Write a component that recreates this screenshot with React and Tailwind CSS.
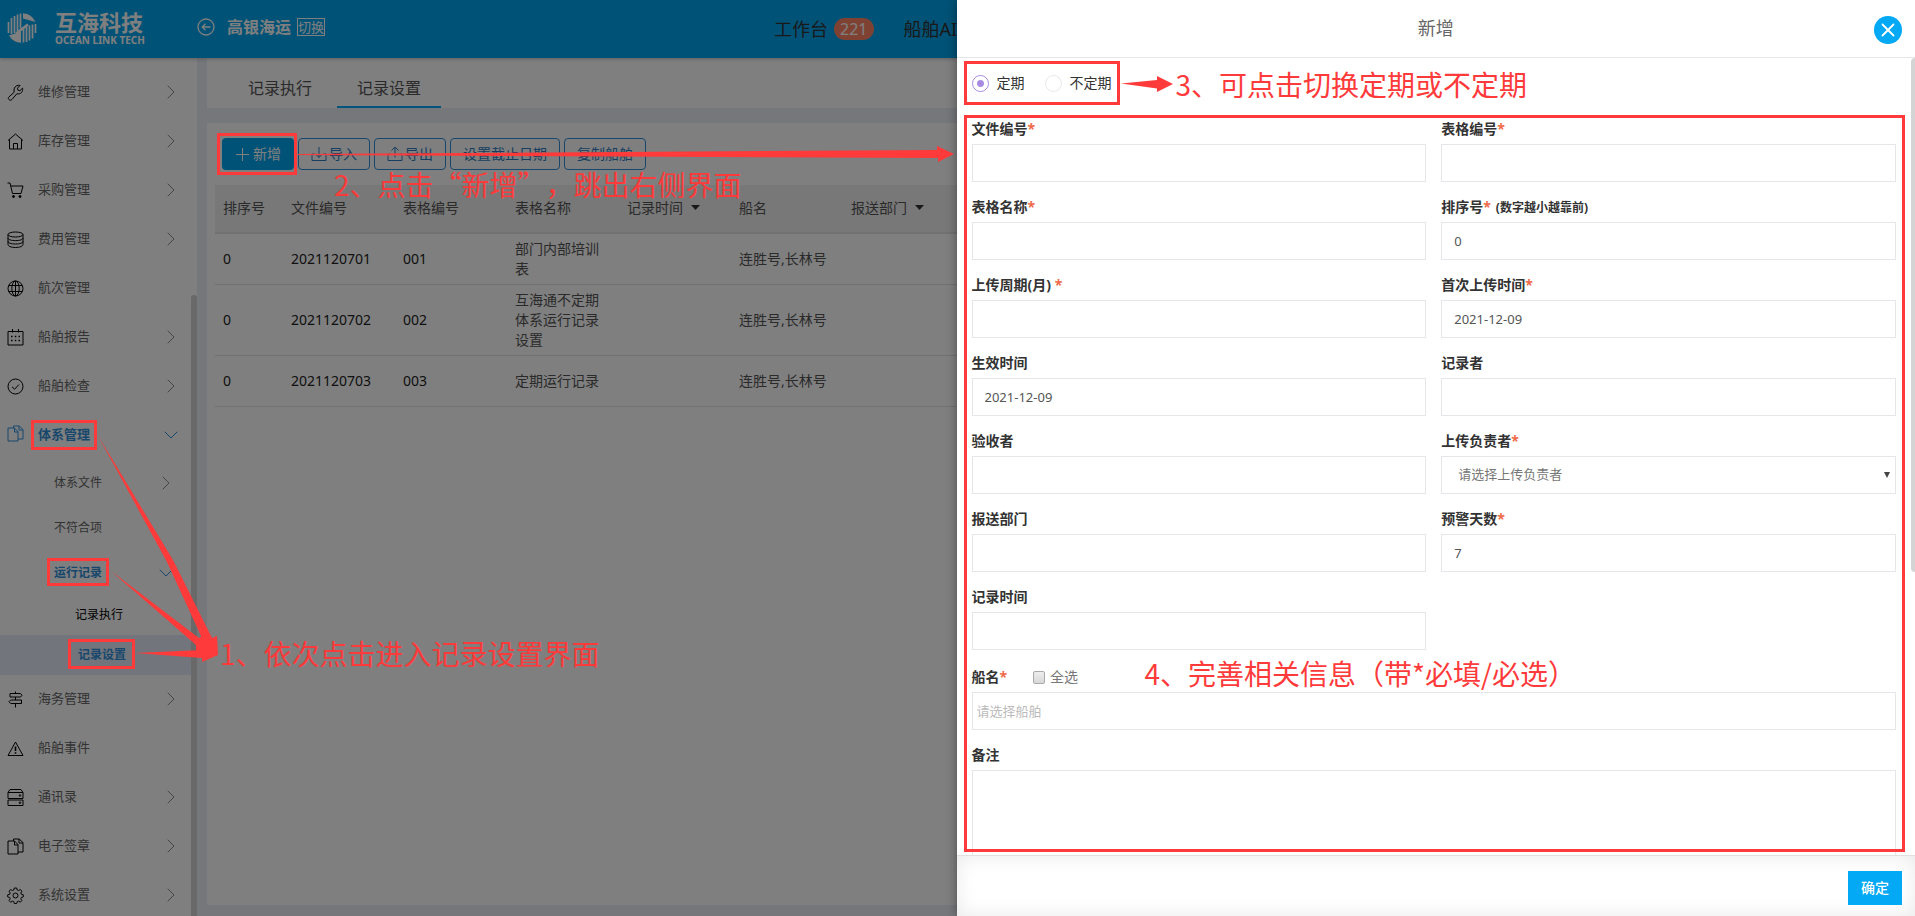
import { useState } from 'react';
import { ChevronDown, ChevronRight, X } from 'lucide-react';

const ICONS = {
  wrench: <path d="M2 15.6c-1-1-.9-1.900 0-2.700l5.200-4.700c-.7-3 .3-5.500 2.600-6.500 1.200-.5 2.200-.5 3.200-.2l-2.500 2.700.4 2 2 .5 2.700-2.600c.5 3.400-1.500 6.400-5.800 5.700L5 15.400c-.9 1-2 1.100-3 .2Z" />,
  home: <path d="M1 7.500 8.500 1 16 7.500M2.500 6.500v9.500h12V6.500M6.500 16v-5.500h4V16" />,
  cart: (
    <>
      <path d="M.5 1H3l2.500 10.500H14L16 4H4" />
      <circle cx="6.500" cy="14.500" r="1" fill="currentColor" />
      <circle cx="13" cy="14.500" r="1" fill="currentColor" />
    </>
  ),
  coins: (
    <>
      <ellipse cx="8.500" cy="3.500" rx="7.500" ry="2.500" />
      <path d="M1 3.500v10c0 1.600 3 3 7.500 3s7.500-1.400 7.500-3v-10M1 7c0 1.600 3 2.600 7.500 2.600S16 8.600 16 7M1 10.300c0 1.600 3 2.700 7.500 2.700s7.500-1.100 7.500-2.700" />
    </>
  ),
  globe: (
    <>
      <circle cx="8.500" cy="8.500" r="7.500" />
      <ellipse cx="8.500" cy="8.500" rx="3.700" ry="7.500" />
      <path d="M8.500 1v15M1.700 5.500h13.600M1.700 11.500h13.600" />
    </>
  ),
  calendar: (
    <>
      <path d="M1 2.500h15v13.500H1ZM5.500 0v3.500M11.500 0v3.500" />
      <path d="M4 7.500h1.500M7.800 7.500h1.500M11.500 7.500H13M4 11.500h1.500M7.800 11.500h1.500M11.500 11.500H13" strokeWidth="1.600" />
    </>
  ),
  check: (
    <>
      <circle cx="8.500" cy="8.500" r="7.500" />
      <path d="m5 8.800 2.600 2.400L12 6.500" />
    </>
  ),
  docs: <path d="M1 3h6.500L11 6.500V16H1ZM7.500 3v4H11M6.500 3V1h5.700L16 4.500V14h-5M12 1v4h4" />,
  sign: <path d="M8.500.5v2M3 2.500h10.500L15 4.300 13.500 6H3ZM8.500 6v3M14.500 9H3.700L2 10.700l1.700 1.800h10.800ZM8.500 12.500v4" />,
  warn: (
    <>
      <path d="M8.500 2 16 15.500H1Z" />
      <path d="M8.500 6.500v4.500M8.500 12.300v1.400" strokeWidth="1.600" />
    </>
  ),
  server: (
    <>
      <path d="M1 3.500 3 .5h11l2 3v6H1ZM1 3.500h15M1 11h15v5.500H1Z" />
      <circle cx="13" cy="6.500" r=".8" />
      <circle cx="13" cy="13.700" r=".8" />
    </>
  ),
  gear: (
    <>
      <circle cx="8.500" cy="8.500" r="2.500" />
      <path d="m7.300 1h2.400l.5 2 1.300.6 1.900-1.100 1.500 1.700-1.100 1.800.5 1.200 2 .6v2.100l-2 .6-.5 1.300 1.100 1.800-1.600 1.600-1.800-1.100-1.300.5-.5 2H7.300l-.5-2-1.300-.5-1.800 1.100-1.600-1.600 1.100-1.800-.5-1.300-2-.6V7.800l2-.6.5-1.200-1.100-1.800 1.500-1.700 1.900 1.100 1.300-.6Z" />
    </>
  ),
};

function NavIcon({ name }) {
  return (
    <span className="shrink-0 pb-[3px]">
      <svg viewBox="0 0 17 17" className="h-[17px] w-[17px]" fill="none" stroke="currentColor" strokeWidth="1">
        {ICONS[name]}
      </svg>
    </span>
  );
}

const NAV_TOP = [
  { icon: 'wrench', label: '维修管理', more: true },
  { icon: 'home', label: '库存管理', more: true },
  { icon: 'cart', label: '采购管理', more: true },
  { icon: 'coins', label: '费用管理', more: true },
  { icon: 'globe', label: '航次管理' },
  { icon: 'calendar', label: '船舶报告', more: true },
  { icon: 'check', label: '船舶检查', more: true },
];

const NAV_BOTTOM = [
  { icon: 'sign', label: '海务管理', more: true },
  { icon: 'warn', label: '船舶事件' },
  { icon: 'server', label: '通讯录', more: true },
  { icon: 'docs', label: '电子签章', more: true },
  { icon: 'gear', label: '系统设置', more: true },
];

function NavItem({ icon, label, more }) {
  return (
    <a href="#" className="flex h-[49px] items-center pr-2 pb-px pl-[7px] text-[13px] text-[#666]">
      <span className="text-black"><NavIcon name={icon} /></span>
      <span className="ml-[14px]">{label}</span>
      {more && <ChevronRight size={24} strokeWidth={1} className="ml-auto text-[#8c8c8c]" />}
    </a>
  );
}

function Sidebar() {
  return (
    <aside className="relative w-[197px] shrink-0 overflow-hidden bg-white">
      <nav className="pt-[10px] pr-[6px]">
        {NAV_TOP.map((item) => <NavItem key={item.label} {...item} />)}
        <a href="#" className="flex h-[49px] items-center pr-2 pb-px pl-[7px] text-[13px] font-bold text-[#2f8fd8]">
          <NavIcon name="docs" />
          <span className="ml-[14px]">体系管理</span>
          <ChevronDown size={24} strokeWidth={1} className="ml-auto" />
        </a>
        <a href="#" className="flex h-[45px] items-center pr-[13px] pl-[54px] text-xs text-[#666]">
          体系文件
          <ChevronRight size={24} strokeWidth={1} className="ml-auto text-[#8c8c8c]" />
        </a>
        <a href="#" className="flex h-[45px] items-center pl-[54px] text-xs text-[#666]">不符合项</a>
        <a href="#" className="flex h-[45px] items-center pr-[13px] pl-[54px] text-xs font-bold text-[#2f8fd8]">
          运行记录
          <ChevronDown size={24} strokeWidth={1} className="ml-auto" />
        </a>
        <a href="#" className="flex h-10 items-center pl-[75px] text-xs text-black">记录执行</a>
        <a href="#" className="flex h-10 items-center bg-[#e6ebf8] pl-[78px] text-xs font-bold text-[#2f8fd8]">记录设置</a>
        {NAV_BOTTOM.map((item) => <NavItem key={item.label} {...item} />)}
      </nav>
      <div className="absolute top-[237px] right-0 bottom-0 w-[6px] rounded-t bg-[#d2d2d2]" />
    </aside>
  );
}

function Logo() {
  return (
    <svg viewBox="0 0 30 30" className="h-[30px] w-[30px]" fill="none" stroke="white">
      <path d="M16 .2A15 15 0 0 1 28.500 9L16 5.500ZM14 29.800A15 15 0 0 1 2 22.500L14 18.500Z" fill="white" stroke="none" />
      <path d="M1.500 9v11M4.500 5v16M7.500 3v17M10.500 1.500v16.500M13.500.500v15" strokeWidth="1.700" />
      <path d="M28.500 11v9M25.500 11.500v14M22.500 12.500v15M19.500 13.500v15.500M16.500 15.500v14" strokeWidth="1.700" />
      <path d="M9 20.500 21 11.500" strokeWidth="2.500" />
    </svg>
  );
}

function Header() {
  return (
    <header className="relative z-10 flex h-[58px] shrink-0 items-center bg-[#03a5ee] text-white shadow-[0_1px_4px_rgba(0,0,0,0.25)]">
      <div className="flex w-[197px] items-center pb-[2px] pl-[7px]">
        <Logo />
        <div className="ml-[18px]">
          <div className="text-[22px] leading-[24px] font-bold">互海科技</div>
          <div className="font-['Noto_Sans',sans-serif] text-[10px] leading-[12px] font-bold">OCEAN LINK TECH</div>
        </div>
      </div>
      <div className="flex items-center pb-[4px]">
        <svg viewBox="0 0 18 18" className="h-[18px] w-[18px]" fill="none" stroke="white" strokeWidth="1.300">
          <circle cx="9" cy="9" r="8" />
          <path d="M13.500 9h-8M8.500 5.700 5.200 9l3.300 3.300" />
        </svg>
        <span className="ml-[12px] text-base font-bold">高银海运</span>
        <button className="ml-[6px] h-[18px] border border-white text-[13px] leading-[16px]">切换</button>
      </div>
      <nav className="ml-[449px] flex shrink-0 items-center text-lg whitespace-nowrap text-[#333]">
        <a href="#">工作台</a>
        <span className="ml-[6px] h-[22px] rounded-full bg-[#ff8564] px-[6px] text-base leading-[22px] text-white">221</span>
        <a href="#" className="ml-[30px]">船舶AI</a>
      </nav>
    </header>
  );
}

const ROWS = [
  { order: '0', file: '2021120701', sheet: '001', name: '部门内部培训表', ships: '连胜号,长林号' },
  { order: '0', file: '2021120702', sheet: '002', name: '互海通不定期体系运行记录设置', ships: '连胜号,长林号' },
  { order: '0', file: '2021120703', sheet: '003', name: '定期运行记录', ships: '连胜号,长林号' },
];

const COLUMNS = [
  { label: '排序号' },
  { label: '文件编号' },
  { label: '表格编号' },
  { label: '表格名称' },
  { label: '记录时间', filter: true },
  { label: '船名' },
  { label: '报送部门', filter: true },
];

function TransferIcon({ up }) {
  return (
    <svg viewBox="0 0 16 16" className="h-4 w-4" fill="none" stroke="currentColor" strokeWidth="1">
      <path d="M3.500 8H1v6.500h14V8h-2.500" />
      <path d={up ? 'M8 11.500V1M4.500 4.500 8 1l3.500 3.500' : 'M8 1v10.500M4.500 8 8 11.500 11.500 8'} />
    </svg>
  );
}

function OutlineButton({ children }) {
  return (
    <button className="flex h-8 items-center gap-[2px] rounded border border-[#2f8fd8] px-3 text-sm text-[#2f7dc0]">
      {children}
    </button>
  );
}

function RecordSettings() {
  return (
    <main className="flex min-w-0 flex-1 flex-col gap-[15px] pb-[11px] pl-[10px]">
      <div className="flex h-[50px] shrink-0 gap-[5px] bg-white pl-[21px] text-base text-[#555]">
        <a href="#" className="px-5 pt-[18px]">记录执行</a>
        <a href="#" className="border-b-2 border-[#03a9f4] px-5 pt-[18px]">记录设置</a>
      </div>
      <section className="flex-1 bg-white pt-[15px] pl-2">
        <div className="flex gap-1 pl-[7px]">
          <button className="flex h-8 items-center gap-[3px] rounded bg-[#03a5ee] px-[13px] text-sm text-white">
            <svg viewBox="0 0 15 15" className="h-[15px] w-[15px]" stroke="currentColor" strokeWidth="1">
              <path d="M7.500 1v13M1 7.500h13" />
            </svg>
            新增
          </button>
          <OutlineButton><TransferIcon /> 导入</OutlineButton>
          <OutlineButton><TransferIcon up /> 导出</OutlineButton>
          <OutlineButton>设置截止日期</OutlineButton>
          <OutlineButton>复制船舶</OutlineButton>
        </div>
        <table className="mt-[15px] w-full table-fixed text-left text-sm text-[#555]">
          <colgroup>
            <col className="w-[68px]" />
            <col className="w-[112px]" />
            <col className="w-[112px]" />
            <col className="w-[112px]" />
            <col className="w-[112px]" />
            <col className="w-[112px]" />
            <col />
          </colgroup>
          <thead>
            <tr className="h-12 border-b-2 border-[#e2e2e2] bg-[#f0f0f0]">
              {COLUMNS.map((c) => (
                <th key={c.label} className="px-2 pb-[2px] font-normal">
                  <span className="flex items-center gap-2">
                    {c.label}
                    {c.filter && (
                      <svg viewBox="0 0 9 5" className="h-[5px] w-[9px]"><path d="M0 0h9L4.500 5Z" fill="#333" /></svg>
                    )}
                  </span>
                </th>
              ))}
            </tr>
          </thead>
          <tbody>
            {ROWS.map((r) => (
              <tr key={r.file} className="h-[51px] border-b border-[#e2e2e2]">
                <td className="px-2 py-[5px] text-[#222]">{r.order}</td>
                <td className="px-2 py-[5px] text-[#222]">{r.file}</td>
                <td className="px-2 py-[5px] text-[#222]">{r.sheet}</td>
                <td className="px-2 py-[5px]">{r.name}</td>
                <td className="px-2 py-[5px]" />
                <td className="px-2 py-[5px]">{r.ships}</td>
                <td className="px-2 py-[5px]" />
              </tr>
            ))}
          </tbody>
        </table>
      </section>
    </main>
  );
}

const FIELDS = [
  { id: 'fileNo', label: '文件编号', required: true },
  { id: 'sheetNo', label: '表格编号', required: true },
  { id: 'sheetName', label: '表格名称', required: true },
  { id: 'order', label: '排序号', required: true, hint: '(数字越小越靠前)', value: '0' },
  { id: 'period', label: '上传周期(月) ', required: true },
  { id: 'firstUpload', label: '首次上传时间', required: true, value: '2021-12-09' },
  { id: 'effective', label: '生效时间', value: '2021-12-09' },
  { id: 'recorder', label: '记录者' },
  { id: 'checker', label: '验收者' },
  { id: 'owner', label: '上传负责者', required: true, options: ['请选择上传负责者'] },
  { id: 'department', label: '报送部门' },
  { id: 'warnDays', label: '预警天数', required: true, value: '7' },
  { id: 'recordTime', label: '记录时间' },
];

const CONTROL = 'block h-[38px] w-full border border-[#e4e6e9] bg-white';

function FieldLabel({ id, label, required, hint }) {
  return (
    <label htmlFor={id} className="block text-sm leading-5 font-bold whitespace-pre text-[#333]">
      {label}
      {required && <span className="text-[#ef6a48]">*</span>}
      {hint && <span className="ml-[5px] text-xs">{hint}</span>}
    </label>
  );
}

function Field({ field }) {
  return (
    <div>
      <div className="mb-[5px]"><FieldLabel {...field} /></div>
      {field.options ? (
        <div className="relative">
          <select id={field.id} className={`${CONTROL} appearance-none pl-4 text-[13px] text-[#777]`}>
            {field.options.map((o) => <option key={o}>{o}</option>)}
          </select>
          <svg viewBox="0 0 6 6" className="pointer-events-none absolute top-4 right-[6px] h-[6px] w-[6px]">
            <path d="M0 0h6L3 6Z" fill="#444" />
          </svg>
        </div>
      ) : (
        <input id={field.id} defaultValue={field.value} className={`${CONTROL} px-3 text-[13px] text-[#555]`} />
      )}
    </div>
  );
}

function Radio({ label, checked, onChange }) {
  return (
    <label className="flex items-center gap-2 text-sm text-[#333]">
      <input
        type="radio"
        name="kind"
        checked={checked}
        onChange={onChange}
        className="h-[17px] w-[17px] appearance-none rounded-full border border-[#e8e8e8] bg-white checked:border-[#a78be0] checked:bg-[radial-gradient(circle,#a78be0_3px,white_4px)]"
      />
      {label}
    </label>
  );
}

const NOTE = "absolute font-['Noto_Sans_CJK_SC',sans-serif] text-[28px] leading-[32px] whitespace-nowrap text-[#fe3a3a] [text-spacing-trim:space-all]";

function Drawer() {
  const [kind, setKind] = useState('定期');

  return (
    <div className="absolute inset-y-0 right-0 left-1/2 -ml-px flex flex-col bg-white shadow-[0_0_10px_rgba(0,0,0,0.4)]">
      <div className="relative flex h-[58px] shrink-0 items-center justify-center border-b border-[#e4e6e9]">
        <h2 className="pb-[2px] text-lg text-[#666]">新增</h2>
        <button
          aria-label="关闭"
          className="absolute top-[16px] right-[13px] flex h-[28px] w-[28px] items-center justify-center rounded-full bg-[#03a9f4] text-white">
          <X size={22} strokeWidth={2} />
        </button>
      </div>

      <form className="min-h-0 flex-1 overflow-hidden pr-[19px] pl-[15px]">
        <div className="flex h-[61px] items-start gap-5 pt-[15px]">
          {['定期', '不定期'].map((k) => (
            <Radio key={k} label={k} checked={kind === k} onChange={() => setKind(k)} />
          ))}
        </div>
        <div className="grid grid-cols-2 gap-[15px]">
          {FIELDS.map((f) => <Field key={f.id} field={f} />)}
        </div>
        <div className="mt-[17px]">
          <div className="mb-[5px] flex items-center">
            <FieldLabel id="ships" label="船名" required />
            <label className="ml-[26px] flex items-center gap-[5px] text-sm leading-5 text-[#777]">
              <input
                type="checkbox"
                className="h-[13px] w-[12px] appearance-none rounded-xs border border-[#aaa] bg-linear-to-b from-[#eee] to-[#d8d8d8] checked:bg-[#03a9f4]"
              />
              全选
            </label>
          </div>
          <input id="ships" placeholder="请选择船舶" className={`${CONTROL} px-1 text-[13px] placeholder:text-[#bbb]`} />
        </div>
        <div className="mt-[15px]">
          <div className="mb-[5px]"><FieldLabel id="remark" label="备注" /></div>
          <textarea id="remark" className="block h-[110px] w-full resize-none border border-[#e4e6e9] bg-white p-3 text-[13px]" />
        </div>
      </form>

      <div className="flex h-[61px] shrink-0 items-center justify-end border-t border-[#e0e0e0] pt-[4px] pr-[13px] shadow-[inset_0_0_20px_rgba(0,0,0,0.09)]">
        <button className="h-[34px] bg-[#03a9f4] px-[13px] text-sm font-medium text-white">确定</button>
      </div>

      <div className="absolute top-[58px] right-0 h-[514px] w-[4px] rounded-l bg-[#d4d4d4]" />

      {/* step 3 and 4 markers */}
      <div className="pointer-events-none absolute inset-0">
        <div className="absolute top-[61px] left-[7px] h-[44px] w-[156px] border-3 border-[#fe3a3a]" />
        <div className="absolute top-[115px] right-[10px] bottom-[64px] left-[7px] border-3 border-[#fe3a3a]" />
        <svg viewBox="0 0 54 18" className="absolute top-[75px] left-[164px] h-[18px] w-[54px]" fill="#fe3a3a">
          <path d="M0 8.500 36 5V1l16 8-16 8v-3.500Z" />
        </svg>
        <div className={`${NOTE} top-[68px] left-[219px]`}>3、可点击切换定期或不定期</div>
        <div className={`${NOTE} top-[657px] left-[188px]`}>4、完善相关信息（带*必填/必选）</div>
      </div>
    </div>
  );
}

// step 1 and 2 markers, anchored to the top left corner of the page
function PageNotes() {
  return (
    <div className="pointer-events-none absolute inset-0">
      <svg className="absolute inset-0 h-full w-full">
        <g fill="none" stroke="#fe3a3a" strokeWidth="3">
          <rect x="32.500" y="421.500" width="63" height="27" />
          <rect x="48.500" y="559.500" width="59" height="25" />
          <rect x="69.500" y="640.500" width="64" height="27" />
          <rect x="218.500" y="134.500" width="77" height="39" />
        </g>
        <g fill="#fe3a3a">
          <path d="M97 434 167 562 201 636 197 646 218 655 217 636 212 638 173 560Z" />
          <path d="M111 571 199 638 206 634 218 655 196 650 196 645Z" />
          <path d="M135 653 202 650v-7l16 12-16 7v-4Z" />
          <path d="M298 154 937 150v-4l17 8-16 8v-4L298 155Z" />
        </g>
      </svg>
      <div className={`${NOTE} top-[637px] left-[220px]`}>1、依次点击进入记录设置界面</div>
      <div className={`${NOTE} top-[168px] left-[334px]`}>2、点击“新增”，跳出右侧界面</div>
    </div>
  );
}

export default function App() {
  return (
    <div className="relative flex h-screen flex-col overflow-hidden bg-[#ebeff6] font-['Noto_Sans','Noto_Sans_CJK_SC',sans-serif]">
      <Header />
      <div className="flex min-h-0 flex-1">
        <Sidebar />
        <RecordSettings />
      </div>
      <div className="absolute inset-0 z-20 bg-black/50" />
      <div className="absolute inset-0 z-30">
        <Drawer />
        <PageNotes />
      </div>
    </div>
  );
}
